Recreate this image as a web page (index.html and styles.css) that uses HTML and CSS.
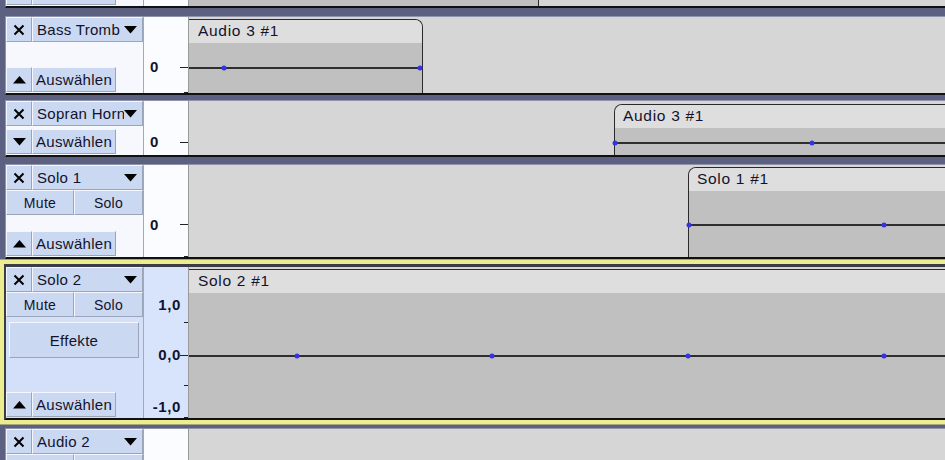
FILE: index.html
```html
<!DOCTYPE html>
<html lang="de">
<head>
    <meta charset="UTF-8">
    <meta name="viewport" content="width=device-width, initial-scale=1.0">
    <title>Spuren</title>
    <link rel="stylesheet" href="styles.css">
</head>
<body>
    <div class="tracks">
        <!-- scrolled out of view, only its lower edge shows -->
        <div class="track t-top">
            <div class="ctrl">
                <div class="fill"></div>
                <div class="row">
                    <button class="btn icon"></button>
                    <button class="btn select"></button>
                </div>
            </div>
            <div class="ruler"></div>
            <div class="area">
                <div class="clip no-left" style="left:-10px;width:360px;top:-60px">
                    <div class="clip-body"></div>
                </div>
            </div>
        </div>

        <div class="track t-bass">
            <div class="ctrl">
                <div class="row">
                    <button class="btn icon"><svg width="12" height="12" viewBox="0 0 12 12"><path d="M1.5 1.5L10.5 10.5M10.5 1.5L1.5 10.5" stroke="#000" stroke-width="2"/></svg></button>
                    <button class="btn name"><span>Bass Tromb</span><svg width="13" height="8" viewBox="0 0 13 8"><polygon points="0,0 13,0 6.5,7.5" fill="#000"/></svg></button>
                </div>
                <div class="fill"></div>
                <div class="row">
                    <button class="btn icon"><svg width="13" height="8" viewBox="0 0 13 8"><polygon points="0,7.5 13,7.5 6.5,0" fill="#000"/></svg></button>
                    <button class="btn select">Auswählen</button>
                </div>
            </div>
            <div class="ruler">
                <span class="lbl" style="top:50px">0</span>
                <i class="tick" style="top:50px"></i>
                <i class="tick short" style="top:75px"></i>
            </div>
            <div class="area">
                <div class="clip no-left" style="left:-10px;width:244px">
                    <div class="clip-head">Audio 3 #1</div>
                    <div class="clip-body"></div>
                    <div class="env" style="top:48px">
                        <i class="pt" style="left:44px"></i>
                        <i class="pt" style="left:240px"></i>
                    </div>
                </div>
            </div>
        </div>

        <div class="track t-horn">
            <div class="ctrl">
                <div class="row">
                    <button class="btn icon"><svg width="12" height="12" viewBox="0 0 12 12"><path d="M1.5 1.5L10.5 10.5M10.5 1.5L1.5 10.5" stroke="#000" stroke-width="2"/></svg></button>
                    <button class="btn name"><span>Sopran Horn</span><svg width="13" height="8" viewBox="0 0 13 8"><polygon points="0,0 13,0 6.5,7.5" fill="#000"/></svg></button>
                </div>
                <div class="fill"></div>
                <div class="row">
                    <button class="btn icon"><svg width="13" height="8" viewBox="0 0 13 8"><polygon points="0,0 13,0 6.5,7.5" fill="#000"/></svg></button>
                    <button class="btn select">Auswählen</button>
                </div>
            </div>
            <div class="ruler">
                <span class="lbl" style="top:41px">0</span>
                <i class="tick" style="top:41px"></i>
            </div>
            <div class="area">
                <div class="clip" style="left:425px;width:600px;top:3px">
                    <div class="clip-head">Audio 3 #1</div>
                    <div class="clip-body"></div>
                    <div class="env" style="top:38px">
                        <i class="pt" style="left:0"></i>
                        <i class="pt" style="left:197px"></i>
                    </div>
                </div>
            </div>
        </div>

        <div class="track t-solo1">
            <div class="ctrl">
                <div class="row">
                    <button class="btn icon"><svg width="12" height="12" viewBox="0 0 12 12"><path d="M1.5 1.5L10.5 10.5M10.5 1.5L1.5 10.5" stroke="#000" stroke-width="2"/></svg></button>
                    <button class="btn name"><span>Solo 1</span><svg width="13" height="8" viewBox="0 0 13 8"><polygon points="0,0 13,0 6.5,7.5" fill="#000"/></svg></button>
                </div>
                <div class="row">
                    <button class="btn half">Mute</button>
                    <button class="btn half">Solo</button>
                </div>
                <div class="fill"></div>
                <div class="row">
                    <button class="btn icon"><svg width="13" height="8" viewBox="0 0 13 8"><polygon points="0,7.5 13,7.5 6.5,0" fill="#000"/></svg></button>
                    <button class="btn select">Auswählen</button>
                </div>
            </div>
            <div class="ruler">
                <span class="lbl" style="top:60px">0</span>
                <i class="tick" style="top:59px"></i>
                <i class="tick short" style="top:91px"></i>
            </div>
            <div class="area">
                <div class="clip" style="left:499px;width:600px">
                    <div class="clip-head">Solo 1 #1</div>
                    <div class="clip-body"></div>
                    <div class="env" style="top:57px">
                        <i class="pt" style="left:0"></i>
                        <i class="pt" style="left:195px"></i>
                    </div>
                </div>
            </div>
        </div>

        <div class="focus">
            <div class="track t-solo2 selected">
                <div class="ctrl">
                    <div class="row">
                        <button class="btn icon"><svg width="12" height="12" viewBox="0 0 12 12"><path d="M1.5 1.5L10.5 10.5M10.5 1.5L1.5 10.5" stroke="#000" stroke-width="2"/></svg></button>
                        <button class="btn name"><span>Solo 2</span><svg width="13" height="8" viewBox="0 0 13 8"><polygon points="0,0 13,0 6.5,7.5" fill="#000"/></svg></button>
                    </div>
                    <div class="row">
                        <button class="btn half">Mute</button>
                        <button class="btn half">Solo</button>
                    </div>
                    <button class="btn effects">Effekte</button>
                    <div class="fill"></div>
                    <div class="row">
                        <button class="btn icon"><svg width="13" height="8" viewBox="0 0 13 8"><polygon points="0,7.5 13,7.5 6.5,0" fill="#000"/></svg></button>
                        <button class="btn select">Auswählen</button>
                    </div>
                </div>
                <div class="ruler">
                    <span class="lbl right" style="top:38px">1,0</span>
                    <i class="tick short" style="top:55px"></i>
                    <span class="lbl right" style="top:88px">0,0</span>
                    <i class="tick" style="top:88px"></i>
                    <i class="tick short" style="top:118px"></i>
                    <span class="lbl right" style="top:140px">-1,0</span>
                    <i class="tick short" style="top:150px"></i>
                </div>
                <div class="area">
                    <div class="clip no-left" style="left:-10px;width:1000px">
                        <div class="clip-head">Solo 2 #1</div>
                        <div class="clip-body"></div>
                        <div class="env" style="top:86px">
                            <i class="pt" style="left:117px"></i>
                            <i class="pt" style="left:312px"></i>
                            <i class="pt" style="left:508px"></i>
                            <i class="pt" style="left:704px"></i>
                        </div>
                    </div>
                </div>
            </div>
        </div>

        <div class="track t-audio2">
            <div class="ctrl">
                <div class="row">
                    <button class="btn icon"><svg width="12" height="12" viewBox="0 0 12 12"><path d="M1.5 1.5L10.5 10.5M10.5 1.5L1.5 10.5" stroke="#000" stroke-width="2"/></svg></button>
                    <button class="btn name"><span>Audio 2</span><svg width="13" height="8" viewBox="0 0 13 8"><polygon points="0,0 13,0 6.5,7.5" fill="#000"/></svg></button>
                </div>
                <div class="row">
                    <button class="btn half"></button>
                    <button class="btn half"></button>
                </div>
            </div>
            <div class="ruler"></div>
            <div class="area"></div>
        </div>
    </div>
</body>
</html>
```

FILE: styles.css
```css
* {
    box-sizing: border-box;
}
body {
    margin: 0;
    height: 460px;
    overflow: hidden;
    background-color: #5c6182;
    font-family: "Liberation Sans", Arial, sans-serif;
    font-size: 15px;
    color: #12122c;
}
.tracks {
    width: 980px;
    height: 460px;
    overflow: hidden;
    display: flex;
    flex-direction: column;
}
.track {
    display: flex;
    flex: none;
    margin-left: 5px;
    border-top: 1px solid #9094aa;
    border-left: 1px solid #9094aa;
    border-bottom: 2px solid #111;
}
.t-top { height: 79px; margin-top: -71px; }
.t-bass { height: 79px; margin-top: 8px; }
.t-horn { height: 57px; margin-top: 5px; }
.t-solo1 { height: 95px; margin-top: 7px; }
.t-solo2 { height: 154px; margin-left: 0; border-color: #3c3c46; border-bottom-color: #111; }
.t-audio2 { height: 32px; margin-top: 4px; border-bottom: none; overflow: hidden; }
.t-audio2 .ctrl { overflow: hidden; }

.focus {
    flex: none;
    margin-top: 1px;
    padding: 2px 0 0 1px;
    background-color: #3c3c46;
    border: 4px solid #ecec90;
    border-right: none;
    box-shadow: 0 0 0 1px #a6a67a;
}

/* control panel */
.ctrl {
    width: 137px;
    display: flex;
    flex-direction: column;
    background-color: #f6f8fe;
}
.selected .ctrl {
    background-color: #d4e0f9;
}
.row {
    display: flex;
    height: 25px;
    flex: none;
}
.fill {
    flex: 1;
}
.ctrl > .row:last-child {
    margin-bottom: 1px;
}
.btn {
    font: inherit;
    color: inherit;
    letter-spacing: 0.3px;
    padding: 0;
    margin: 0;
    height: 25px;
    display: flex;
    align-items: center;
    background-color: #cbd8f2;
    border: 1px solid;
    border-color: #f4f7ff #9ca4b8 #9ca4b8 #f4f7ff;
    white-space: nowrap;
    overflow: hidden;
}
.icon {
    width: 26px;
    justify-content: center;
}
.name {
    width: 111px;
    padding: 0 5px 0 4px;
}
.name span {
    flex: 1;
    overflow: hidden;
    text-align: left;
}
.name svg {
    flex: none;
}
.select {
    width: 84px;
    padding-left: 3px;
}
.half {
    width: 68px;
    justify-content: center;
    font-size: 14px;
}
.half + .half {
    width: 69px;
}
.effects {
    height: 36px;
    margin: 5px 4px 0 3px;
    justify-content: center;
}

/* vertical ruler */
.ruler {
    width: 45px;
    position: relative;
    background-color: #fbfcff;
    border-left: 1px solid #a4a8b8;
}
.selected .ruler {
    background-color: #d8e4fc;
}
.lbl {
    position: absolute;
    left: 6px;
    font-weight: bold;
    font-size: 15px;
    letter-spacing: 0.6px;
    line-height: 18px;
    transform: translateY(-50%);
}
.lbl.right {
    left: auto;
    right: 7px;
}
.tick {
    position: absolute;
    right: 0;
    width: 8px;
    height: 1px;
    background-color: #222;
}
.tick.short {
    width: 4px;
}

/* waveform area */
.area {
    flex: 1;
    position: relative;
    overflow: hidden;
    background-color: #d6d6d6;
    border-left: 1px solid #9a9a9a;
}
.clip {
    position: absolute;
    top: 2px;
    bottom: 0;
    display: flex;
    flex-direction: column;
    border: 1px solid #2a2a2a;
    border-bottom: none;
    border-radius: 8px 8px 0 0;
}
.clip-head {
    height: 23px;
    flex: none;
    padding-left: 8px;
    line-height: 22px;
    font-size: 15.5px;
    letter-spacing: 0.7px;
    background-color: #dedede;
    border-radius: 7px 7px 0 0;
}
.no-left .clip-head {
    padding-left: 18px;
}
.clip-body {
    flex: 1;
    background-color: #c0c0c0;
}
.env {
    position: absolute;
    left: 0;
    right: 0;
    height: 2px;
    margin-top: -1px;
    background-color: #2e2e2e;
}
.pt {
    position: absolute;
    top: 1px;
    width: 5px;
    height: 5px;
    border-radius: 50%;
    background-color: #3434e6;
    transform: translate(-50%, -50%);
}
```
